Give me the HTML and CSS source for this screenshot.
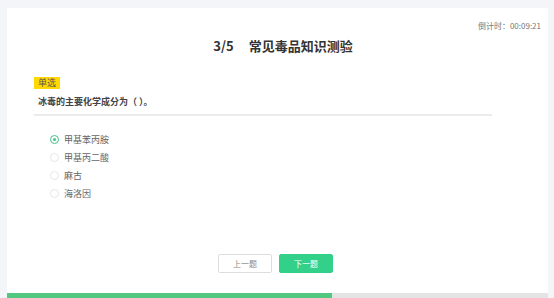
FILE: index.html
```html
<!DOCTYPE html>
<html lang="zh">
<head>
<meta charset="utf-8">
<link rel="stylesheet" href="styles.css">
</head>
<body>
<div class="page">
  <div class="card">
    <div class="timer">倒计时：00:09:21</div>
    <div class="title"><span class="num">3/5</span><span>常见毒品知识测验</span></div>
    <div class="question">
      <span class="tag">单选</span>
      <div class="qtext">冰毒的主要化学成分为（ ）。</div>
    </div>
    <ul class="options">
      <li class="opt checked"><span class="radio"></span>甲基苯丙胺</li>
      <li class="opt"><span class="radio"></span>甲基丙二酸</li>
      <li class="opt"><span class="radio"></span>麻古</li>
      <li class="opt"><span class="radio"></span>海洛因</li>
    </ul>
    <div class="actions">
      <button class="btn prev">上一题</button>
      <button class="btn next">下一题</button>
    </div>
    <div class="progress"><div class="bar" style="width:60%"></div></div>
  </div>
</div>
</body>
</html>
```
FILE: styles.css
```css
html, body { margin: 0; padding: 0; }
body {
  background: #f3f5f9;
  font-family: "Noto Sans CJK SC", "Noto Sans", sans-serif;
  color: #333;
}
.page {
  height: 298px;
  box-sizing: border-box;
  padding: 8px 6px 0 7px;
  display: flex;
}
.card {
  flex: 1;
  background: #fff;
  display: flex;
  flex-direction: column;
}
.timer {
  text-align: right;
  font-size: 8px;
  line-height: 11px;
  color: #777;
  padding: 12px 7px 0 0;
}
.title {
  text-align: center;
  font-size: 13px;
  line-height: 18px;
  font-weight: bold;
  color: #333;
  margin-top: 6px;
  padding-left: 11px;
}
.title .num { margin-right: 15px; }
.question {
  margin: 22px 0 0 27px;
  width: 458px;
  border-bottom: 2px solid #ebebeb;
  padding-bottom: 6px;
  display: flex;
  flex-direction: column;
  align-items: flex-start;
}
.tag {
  display: block;
  background: #ffd800;
  color: #555;
  font-size: 9px;
  line-height: 12px;
  height: 12px;
  padding: 0 4px;
}
.qtext {
  margin-top: 7px;
  padding-left: 4px;
  font-size: 9px;
  line-height: 12px;
  font-weight: bold;
  color: #444;
}
.options {
  list-style: none;
  margin: 14px 0 0 43px;
  padding: 0;
}
.opt {
  display: flex;
  align-items: center;
  height: 18px;
  font-size: 9px;
  color: #666;
}
.radio {
  width: 7px;
  height: 7px;
  border: 1px solid #e6e6e6;
  border-radius: 50%;
  margin-right: 5px;
  box-sizing: content-box;
  position: relative;
}
.opt.checked .radio {
  border-color: #3cc585;
}
.opt.checked .radio::after {
  content: "";
  position: absolute;
  left: 2px; top: 2px;
  width: 3px; height: 3px;
  border-radius: 50%;
  background: #3cc585;
}
.actions {
  margin-top: auto;
  margin-bottom: 20px;
  display: flex;
  justify-content: center;
  gap: 7px;
  padding-right: 4px;
}
.btn {
  width: 54px;
  height: 19px;
  font-family: inherit;
  font-size: 8px;
  border-radius: 2px;
  padding: 0;
  cursor: pointer;
}
.prev {
  background: #fff;
  border: 1px solid #ddd;
  color: #888;
}
.next {
  background: #33d08a;
  border: 1px solid #33d08a;
  color: #fff;
}
.progress {
  height: 5px;
  background: #e4e4e4;
}
.bar {
  height: 100%;
  background: #52c77f;
}
```
